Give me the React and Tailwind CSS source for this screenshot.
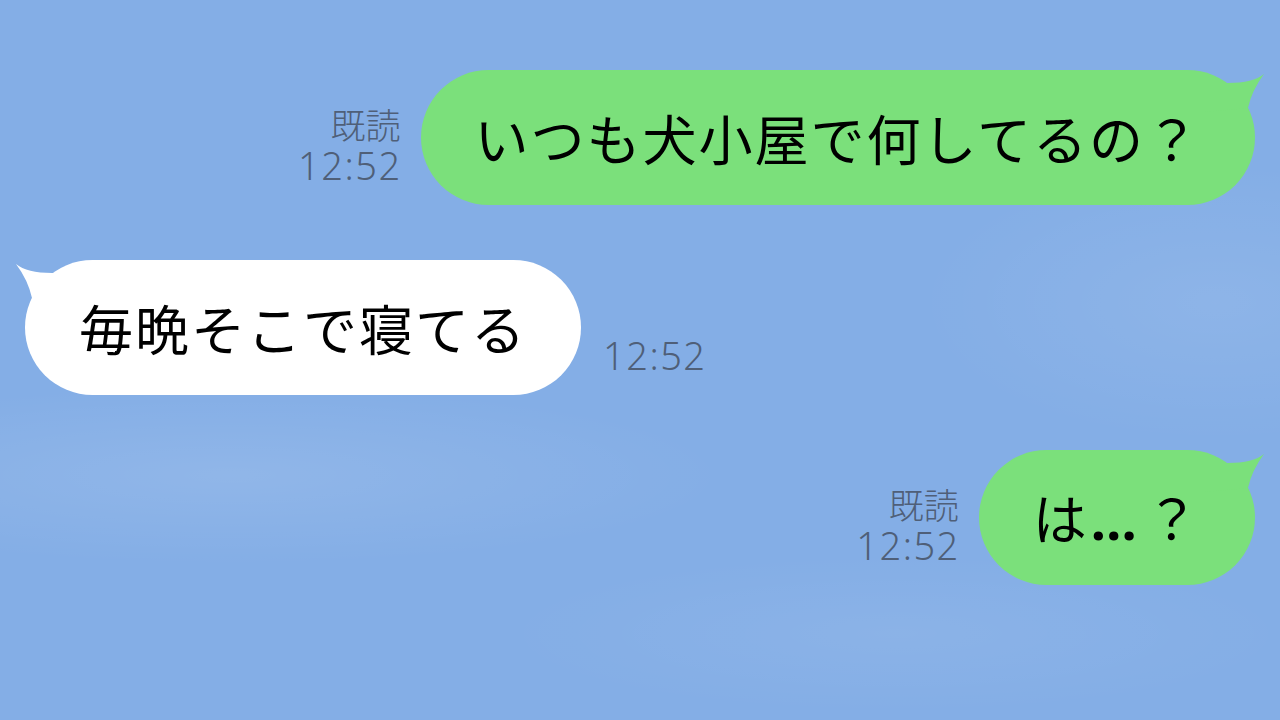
import React from "react";

const JP = { fontFamily: '"Noto Sans CJK JP", "Noto Sans", sans-serif' };
const LAT = { fontFamily: '"Noto Sans", sans-serif' };

function Tail({ color, right }) {
  return (
    <svg
      width="70"
      height="50"
      viewBox="0 0 70 50"
      className={
        "absolute top-0 " + (right ? "right-[-10px] -scale-x-100" : "left-[-10px]")
      }
    >
      <path
        d="M1 4 Q 12 13 37 13 L 60 13 L 60 42 L 17 38 Q 13 20 1 4 Z"
        fill={color}
      />
    </svg>
  );
}

function Bubble({ children, green }) {
  const color = green ? "#7be07b" : "#ffffff";
  return (
    <div
      className={
        "relative flex h-[135px] items-center rounded-full px-[54px] " +
        (green ? "bg-[#7be07b]" : "bg-white")
      }
    >
      <Tail color={color} right={green} />
      <span
        className="relative whitespace-nowrap text-[54px] leading-none tracking-[2px] text-black"
        style={JP}
      >
        {children}
      </span>
    </div>
  );
}

function Meta({ read }) {
  return (
    <div className="mb-[19px] flex flex-col items-end text-[#4f5f78]">
      {read && (
        <span className="block h-[40px] text-[35px] leading-[40px] font-light" style={JP}>
          既読
        </span>
      )}
      <span
        className="block h-[42px] text-[38px] leading-[42px] font-light tracking-[1.5px] mr-[-1px]"
        style={LAT}
      >
        12:52
      </span>
    </div>
  );
}

export default function App() {
  return (
    <div className="h-[720px] w-[1280px] overflow-hidden bg-[#84aee6] bg-[radial-gradient(ellipse_500px_90px_at_18%_66%,rgba(255,255,255,0.10),transparent),radial-gradient(ellipse_300px_140px_at_95%_42%,rgba(255,255,255,0.08),transparent),radial-gradient(ellipse_400px_80px_at_70%_88%,rgba(255,255,255,0.06),transparent)]">
      <div className="flex flex-col gap-[55px] pt-[70px]">
        <div className="flex items-end justify-end gap-[20px] pr-[25px]">
          <Meta read />
          <Bubble green>いつも犬小屋で何してるの？</Bubble>
        </div>
        <div className="flex items-end justify-start gap-[22px] pl-[25px]">
          <Bubble>毎晩そこで寝てる</Bubble>
          <Meta />
        </div>
        <div className="flex items-end justify-end gap-[20px] pr-[25px]">
          <Meta read />
          <Bubble green>
            は
            <span className="font-bold tracking-[0px] ml-[2px] mr-[8px]" style={LAT}>
              …
            </span>
            ？
          </Bubble>
        </div>
      </div>
    </div>
  );
}
